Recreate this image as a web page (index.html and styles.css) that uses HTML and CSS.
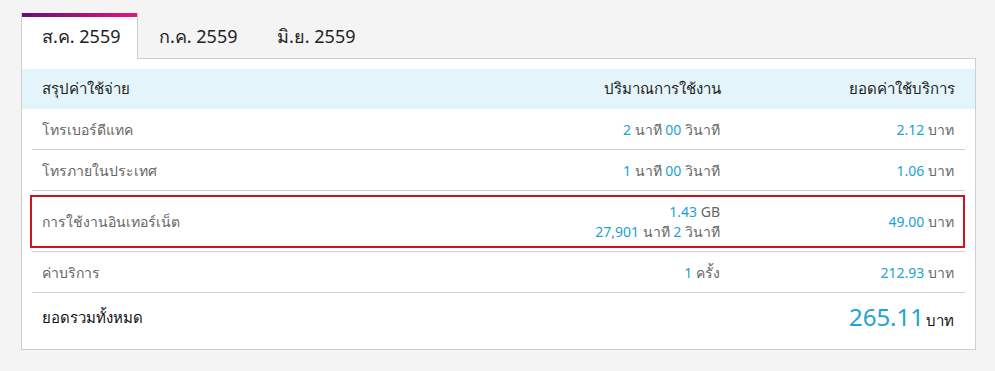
FILE: index.html
```html
<!DOCTYPE html>
<html lang="th">
<head>
<meta charset="utf-8">
<title>สรุปค่าใช้จ่าย</title>
<link rel="stylesheet" href="styles.css">
</head>
<body>
<div class="wrap">
  <div class="tabs">
    <div class="tab active">ส.ค. 2559</div>
    <div class="tab">ก.ค. 2559</div>
    <div class="tab">มิ.ย. 2559</div>
  </div>
  <div class="panel">
    <div class="head">
      <div>สรุปค่าใช้จ่าย</div>
      <div class="r">ปริมาณการใช้งาน</div>
      <div class="r">ยอดค่าใช้บริการ</div>
    </div>
    <div class="row">
      <div class="label">โทรเบอร์ดีแทค</div>
      <div class="r"><span class="n">2</span> นาที <span class="n">00</span> วินาที</div>
      <div class="r"><span class="n">2.12</span> บาท</div>
    </div>
    <div class="row">
      <div class="label">โทรภายในประเทศ</div>
      <div class="r"><span class="n">1</span> นาที <span class="n">00</span> วินาที</div>
      <div class="r"><span class="n">1.06</span> บาท</div>
    </div>
    <div class="row hl-row">
      <div class="hl">
        <div class="label">การใช้งานอินเทอร์เน็ต</div>
        <div class="r multi">
          <div><span class="n">1.43</span> GB</div>
          <div><span class="n">27,901</span> นาที <span class="n">2</span> วินาที</div>
        </div>
        <div class="r"><span class="n">49.00</span> บาท</div>
      </div>
    </div>
    <div class="row">
      <div class="label">ค่าบริการ</div>
      <div class="r"><span class="n">1</span> ครั้ง</div>
      <div class="r"><span class="n">212.93</span> บาท</div>
    </div>
    <div class="row total">
      <div class="label">ยอดรวมทั้งหมด</div>
      <div></div>
      <div class="r"><span class="big">265.11</span><span class="unit">บาท</span></div>
    </div>
  </div>
</div>
</body>
</html>
```
FILE: styles.css
```css
* { box-sizing: border-box; }
html, body { margin: 0; }
body {
  background: #f4f4f4;
  font-family: "Noto Sans", "Liberation Sans", sans-serif;
  color: #666;
}
.wrap {
  width: 955px;
  margin: 13px 0 0 21px;
}
.tabs {
  display: flex;
  height: 46px;
  position: relative;
  z-index: 1;
  margin-bottom: -1px;
}
.tab {
  width: 118px;
  padding: 13px 0 0 21px;
  font-size: 18px;
  line-height: 20px;
  color: #222;
}
.tab.active {
  width: 117px;
  padding-left: 20px;
  border-left: 1px solid #cfcfcf;
  border-right: 1px solid #cfcfcf;
  background: linear-gradient(90deg, #6a0d6f, #e4167b) top / 100% 4px no-repeat, #fff;
}
.panel {
  background: #fff;
  border: 1px solid #cfcfcf;
  padding: 10px 0 0;
  height: 292px;
}
.head {
  display: grid;
  grid-template-columns: 1fr 234px 234px;
  align-items: center;
  height: 40px;
  background: #e3f4fb;
  padding: 0 20px;
  font-size: 15px;
  color: #222;
}
.row {
  display: grid;
  grid-template-columns: 1fr 234px 234px;
  align-items: center;
  margin: 0 10px;
  height: 41px;
  border-bottom: 1px solid #cfcfcf;
  padding: 2px 11px 0 10px;
  font-size: 14px;
}
.r { text-align: right; }
.n { color: #22a2d4; }
.hl-row {
  display: block;
  height: 61px;
  padding: 4px 0 3px;
}
.hl {
  display: grid;
  grid-template-columns: 1fr 234px 234px;
  align-items: center;
  height: 53px;
  margin-left: -2px;
  border: 2px solid #d0121b;
  padding: 1px 9px 0 10px;
}
.multi { line-height: 20px; }
.total {
  height: 57px;
  border-bottom: 0;
  padding: 0 11px 8px 10px;
}
.total .label { color: #111; font-size: 15px; }
.big {
  font-size: 24px;
  color: #22a2d4;
  line-height: 30px;
}
.unit {
  font-size: 15px;
  color: #111;
  margin-left: 2px;
}
```
